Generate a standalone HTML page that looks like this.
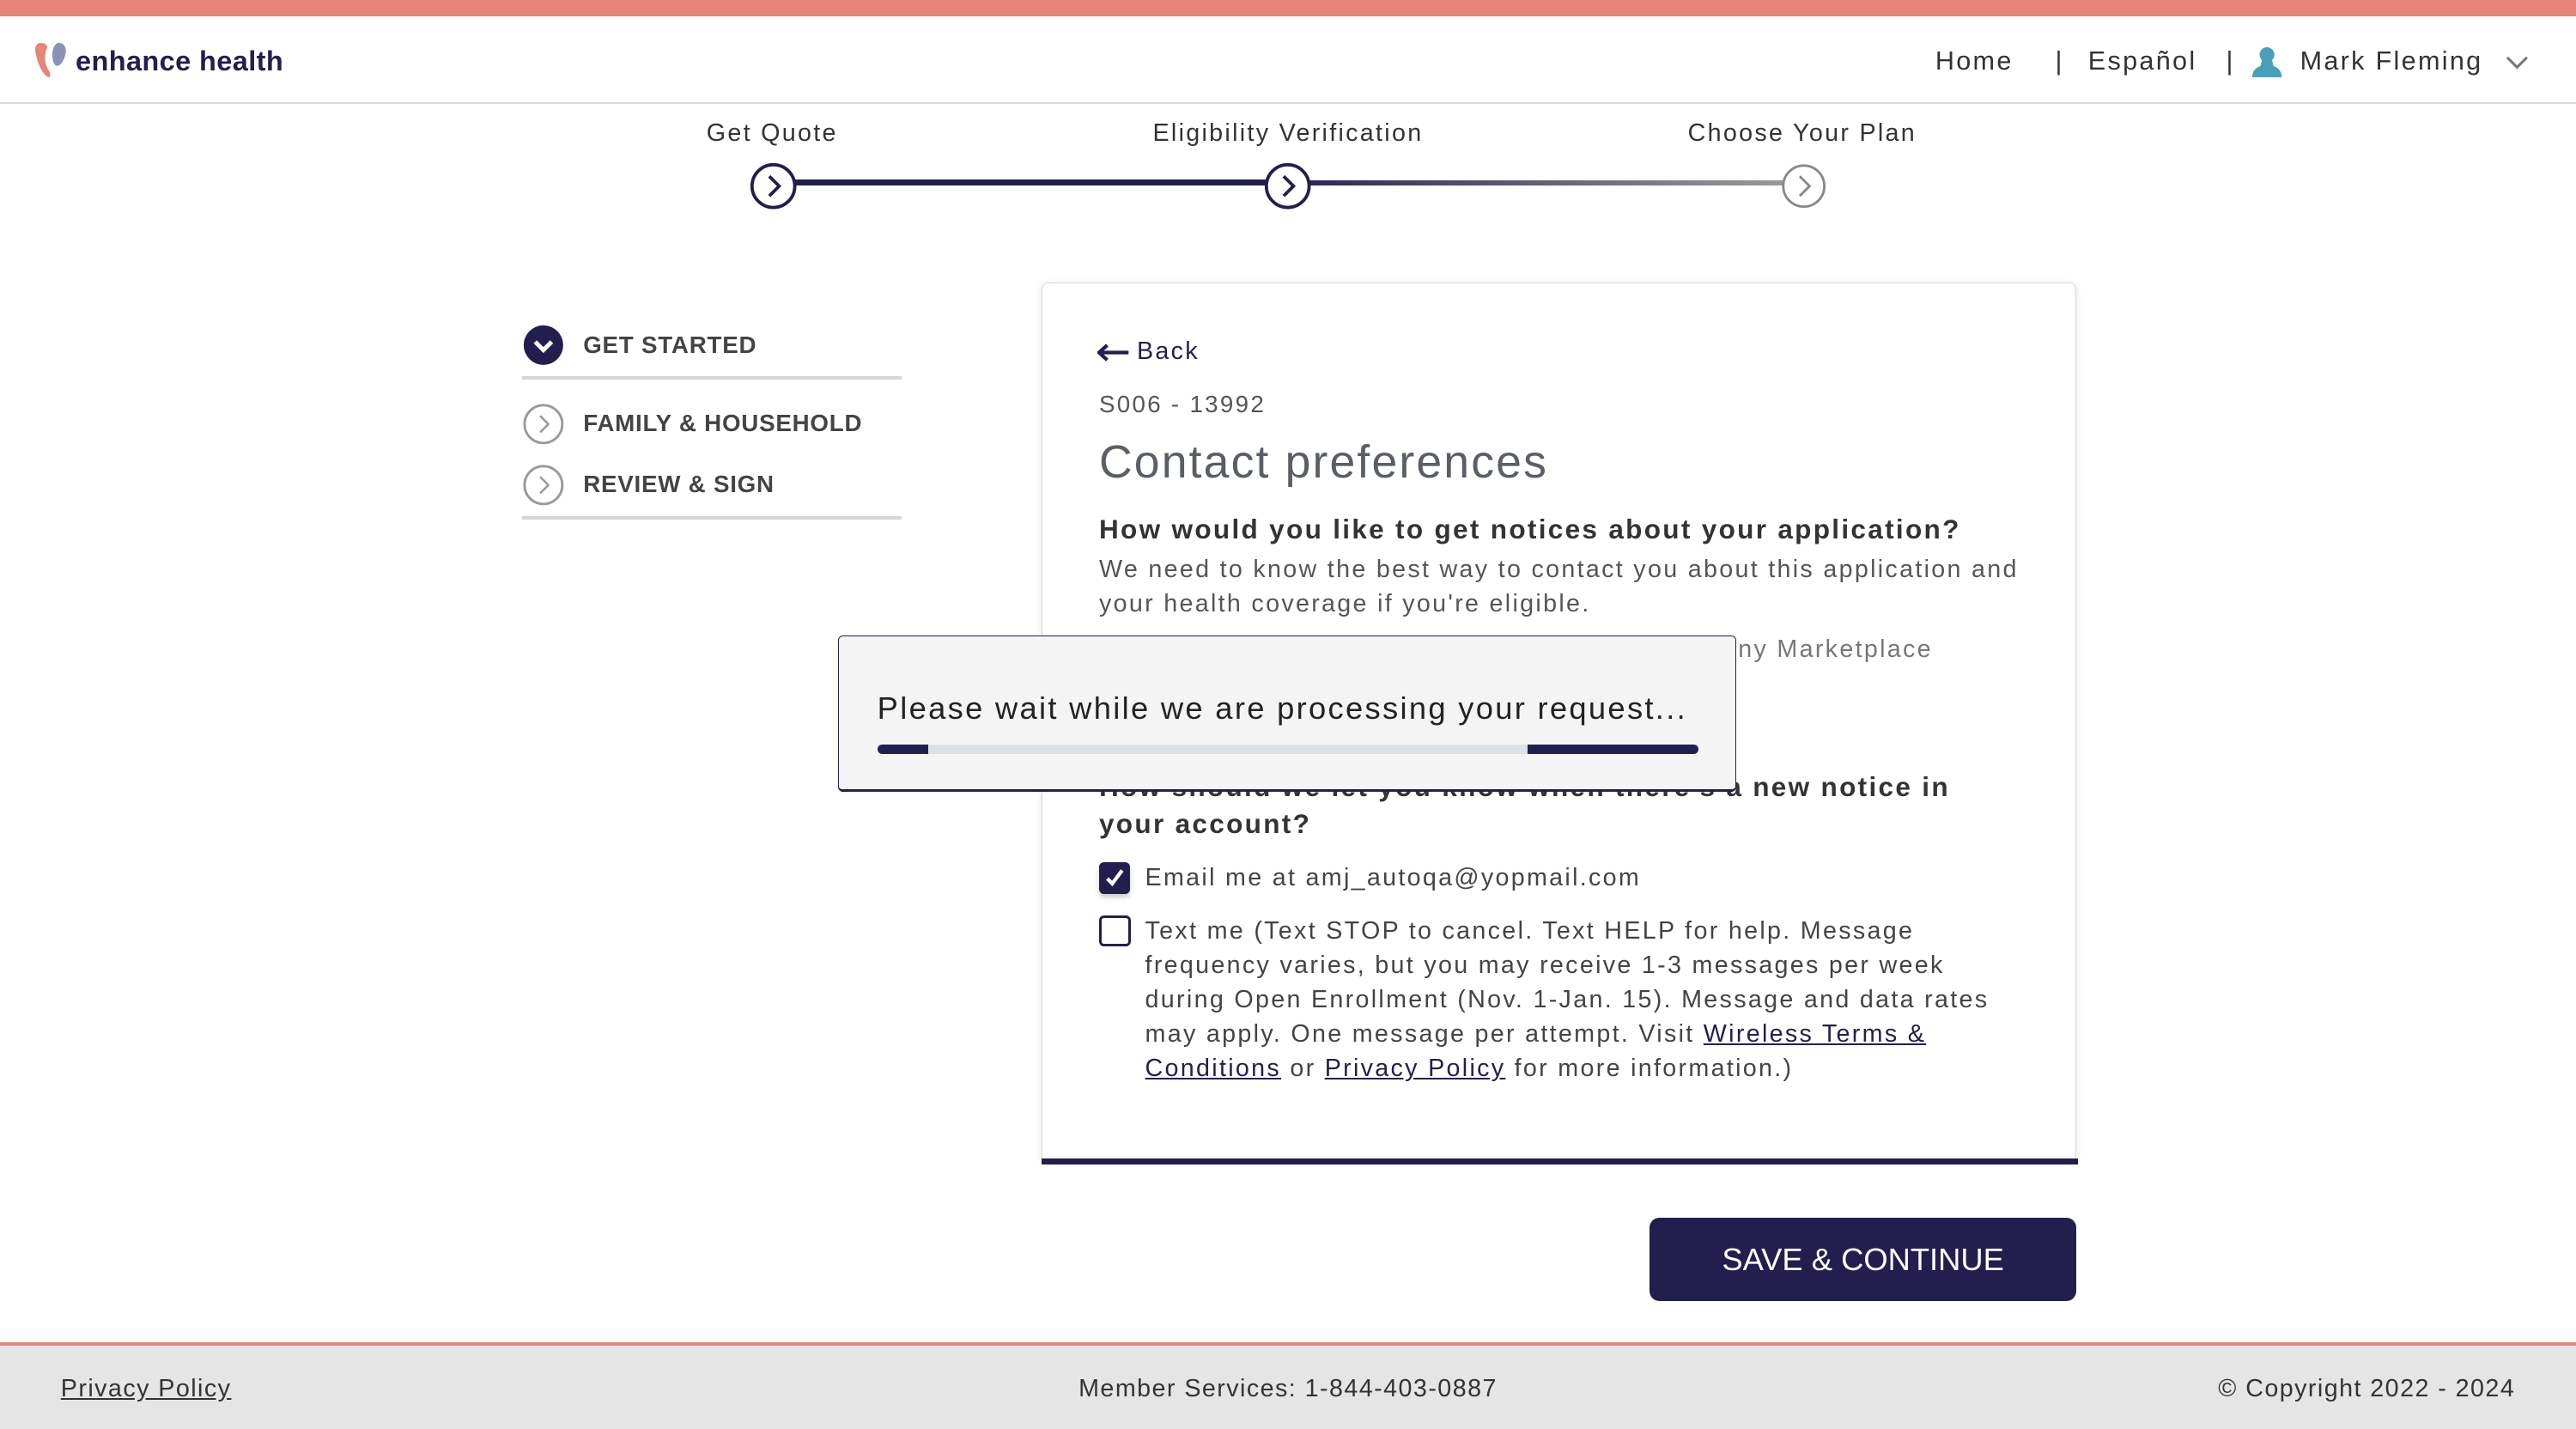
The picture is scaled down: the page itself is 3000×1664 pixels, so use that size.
<!DOCTYPE html>
<html><head><meta charset="utf-8"><style>
html,body{margin:0;padding:0;background:#fff;overflow:hidden;width:3000px;height:1664px}
#w{position:relative;width:1568px;height:870px;zoom:1.91327;font-family:"Liberation Sans",sans-serif;color:#333;letter-spacing:.075em}
.a{position:absolute;white-space:nowrap}
.t{line-height:20px}
.dk{color:#221f4f}
.sb{font-weight:bold;font-size:14.5px;color:#444;letter-spacing:.4px}
u{text-decoration:underline;color:#221f4f}
</style></head><body><div id="w">
<div class="a" style="left:0;top:0;width:1568px;height:10px;background:#e6857a"></div>
<div class="a" style="left:0;top:62px;width:1568px;height:1px;background:#d9d9d9"></div>
<svg class="a" style="left:20px;top:24px" width="24" height="26" viewBox="0 0 24 26"><path d="M5 2C2 2 1 5 2 9c1 5 4 13 8 14 1 0 1-2 0-4C7 15 7 8 9 5 9 3 7 2 5 2z" fill="#e6857a"/><path d="M16 2c3 0 5 3 4 7-1 4-3 7-5 7-2 0-3-3-3-7 0-4 2-7 4-7z" fill="#8b92b8"/></svg>
<div class="a t dk" style="left:46px;top:27px;font-size:17px;font-weight:bold;letter-spacing:.2px">enhance health</div>
<div class="a t" style="left:1178px;top:27px;font-size:16px">Home</div>
<div class="a t" style="left:1251px;top:27px;font-size:16px">|</div>
<div class="a t" style="left:1271px;top:27px;font-size:16px">Español</div>
<div class="a t" style="left:1355px;top:27px;font-size:16px">|</div>
<svg class="a" style="left:1370px;top:28px" width="20" height="19" viewBox="0 0 20 19"><circle cx="10" cy="5" r="4.5" fill="#4aa0bb"/><path d="M7 8h6l1 4c3 1 5 3 5 7H1c0-4 2-6 5-7z" fill="#4aa0bb"/></svg>
<div class="a t" style="left:1400px;top:27px;font-size:16px">Mark Fleming</div>
<svg class="a" style="left:1525px;top:33px" width="14" height="10"><path d="M1 2l6 6 6-6" stroke="#777" stroke-width="1.6" fill="none"/></svg>
<div class="a t" style="left:370px;width:200px;text-align:center;top:71px;font-size:15px">Get Quote</div>
<div class="a t" style="left:634px;width:300px;text-align:center;top:71px;font-size:15px">Eligibility Verification</div>
<div class="a t" style="left:987px;width:220px;text-align:center;top:71px;font-size:15px">Choose Your Plan</div>
<div class="a" style="left:484px;top:109px;width:288px;height:4px;background:#221f4f"></div>
<div class="a" style="left:797px;top:110px;width:288px;height:3px;background:linear-gradient(90deg,#2c2a55,#9a9a9a)"></div>
<svg class="a" style="left:456px;top:98px" width="30" height="30"><circle cx="15" cy="15" r="13" fill="#fff" stroke="#221f4f" stroke-width="2"/><path d="M12.5 9l6 6-6 6" stroke="#221f4f" stroke-width="2" fill="none"/></svg>
<svg class="a" style="left:769px;top:98px" width="30" height="30"><circle cx="15" cy="15" r="13" fill="#fff" stroke="#221f4f" stroke-width="2"/><path d="M12.5 9l6 6-6 6" stroke="#221f4f" stroke-width="2" fill="none"/></svg>
<svg class="a" style="left:1083px;top:98px" width="30" height="30"><circle cx="15" cy="15" r="12.5" fill="#fff" stroke="#888" stroke-width="1.5"/><path d="M12.5 9l6 6-6 6" stroke="#888" stroke-width="1.5" fill="none"/></svg>
<svg class="a" style="left:318px;top:197px" width="26" height="26"><circle cx="13" cy="13" r="12" fill="#221f4f"/><path d="M8 11l5 5 5-5" stroke="#fff" stroke-width="2.6" fill="none"/></svg>
<div class="a t sb" style="left:355px;top:200px">GET STARTED</div>
<div class="a" style="left:318px;top:229px;width:231px;height:2px;background:#d6d6d6"></div>
<svg class="a" style="left:318px;top:245px" width="26" height="26"><circle cx="13" cy="13" r="11.5" fill="none" stroke="#999" stroke-width="1.5"/><path d="M11 8l5 5-5 5" stroke="#999" stroke-width="1.3" fill="none"/></svg>
<div class="a t sb" style="left:355px;top:248px">FAMILY &amp; HOUSEHOLD</div>
<svg class="a" style="left:318px;top:282px" width="26" height="26"><circle cx="13" cy="13" r="11.5" fill="none" stroke="#999" stroke-width="1.5"/><path d="M11 8l5 5-5 5" stroke="#999" stroke-width="1.3" fill="none"/></svg>
<div class="a t sb" style="left:355px;top:285px">REVIEW &amp; SIGN</div>
<div class="a" style="left:318px;top:314px;width:231px;height:2px;background:#d6d6d6"></div>
<div class="a" style="left:634px;top:172px;width:629px;height:533px;border:1px solid #d8d8d8;border-bottom:none;border-radius:4px 4px 0 0;box-shadow:0 1px 4px rgba(0,0,0,.12);background:#fff"></div>
<div class="a" style="left:634px;top:705px;width:631px;height:4px;background:#221f4f"></div>
<svg class="a" style="left:668px;top:209px" width="20" height="11"><path d="M1 5.5h18M6 1L1 5.5 6 10" stroke="#221f4f" stroke-width="2.2" fill="none"/></svg>
<div class="a t dk" style="left:692px;top:204px;font-size:15px">Back</div>
<div class="a t" style="left:669px;top:236px;font-size:14.5px;color:#555">S006 - 13992</div>
<div class="a" style="left:669px;top:264px;font-size:28px;line-height:36px;color:#5a5e66;letter-spacing:.04em">Contact preferences</div>
<div class="a t" style="left:669px;top:312px;font-size:16.5px;font-weight:bold">How would you like to get notices about your application?</div>
<div class="a" style="left:669px;top:336px;font-size:15px;line-height:21px;color:#555">We need to know the best way to contact you about this application and<br>your health coverage if you're eligible.</div>
<div class="a t" style="left:1058px;top:385px;font-size:15px;color:#777">ny Marketplace</div>
<div class="a" style="left:669px;top:468px;font-size:16.5px;line-height:22px;font-weight:bold">How should we let you know when there's a new notice in<br>your account?</div>
<div class="a" style="left:669px;top:525px;width:19px;height:19px;background:#221f4f;border-radius:3px;box-shadow:0 2px 3px rgba(0,0,0,.2)"></div>
<svg class="a" style="left:669px;top:525px" width="19" height="19"><path d="M5 10l3 3 6-8" stroke="#fff" stroke-width="2.2" fill="none"/></svg>
<div class="a t" style="left:697px;top:524px;font-size:15px;color:#444">Email me at amj_autoqa@yopmail.com</div>
<div class="a" style="left:669px;top:557px;width:16px;height:16px;border:2px solid #221f4f;border-radius:3px"></div>
<div class="a" style="left:697px;top:556px;font-size:15px;line-height:21px;color:#444">Text me (Text STOP to cancel. Text HELP for help. Message<br>frequency varies, but you may receive 1-3 messages per week<br>during Open Enrollment (Nov. 1-Jan. 15). Message and data rates<br>may apply. One message per attempt. Visit <u>Wireless Terms &amp;</u><br><u>Conditions</u> or <u>Privacy Policy</u> for more information.)</div>
<div class="a" style="left:510px;top:387px;width:546px;height:93px;background:#f4f4f4;border:1px solid #221f4f;border-bottom-width:2px;border-radius:3px"></div>
<div class="a" style="left:534px;top:419px;font-size:19px;line-height:24px;color:#222">Please wait while we are processing your request...</div>
<div class="a" style="left:534px;top:453px;width:500px;height:6px;background:#dde0e4;border-radius:3px;overflow:hidden"><div style="position:absolute;left:0;top:0;width:31px;height:6px;background:#221f4f"></div><div style="position:absolute;left:396px;top:0;width:104px;height:6px;background:#221f4f"></div></div>
<div class="a" style="left:1004px;top:741px;width:260px;height:51px;background:#221f4f;border-radius:6px;color:#fff;font-size:19px;line-height:51px;text-align:center;letter-spacing:0">SAVE &amp; CONTINUE</div>
<div class="a" style="left:0;top:817px;width:1568px;height:2px;background:#e6857a"></div>
<div class="a" style="left:0;top:819px;width:1568px;height:51px;background:#e5e5e5"></div>
<div class="a t" style="left:37px;top:835px;font-size:15px;letter-spacing:.05em"><u style="color:#333">Privacy Policy</u></div>
<div class="a t" style="left:584px;width:400px;text-align:center;top:835px;font-size:15px;letter-spacing:.05em">Member Services: 1-844-403-0887</div>
<div class="a t" style="right:37px;top:835px;font-size:15px;letter-spacing:.05em">© Copyright 2022 - 2024</div>
</div></body></html>
